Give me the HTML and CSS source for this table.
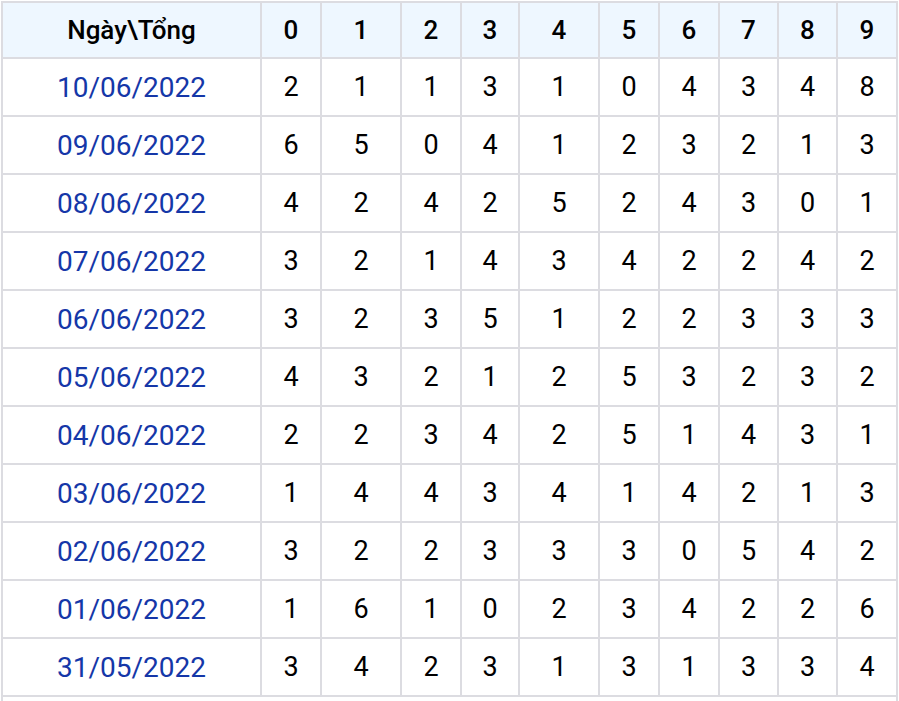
FILE: index.html
```html
<!DOCTYPE html>
<html lang="vi">
<head>
<meta charset="utf-8">
<title>Thống kê tổng</title>
<link rel="stylesheet" href="styles.css">
</head>
<body>
<div class="wrap">
<table class="stats">
<colgroup>
<col class="c-date"><col class="c60"><col class="c80"><col class="c60"><col class="c58"><col class="c80"><col class="c60"><col class="c60"><col class="c59"><col class="c59"><col class="c60">
</colgroup>
<thead>
<tr><th>Ngày\Tổng</th><th>0</th><th>1</th><th>2</th><th>3</th><th>4</th><th>5</th><th>6</th><th>7</th><th>8</th><th>9</th></tr>
</thead>
<tbody>
<tr><td class="date">10/06/2022</td><td>2</td><td>1</td><td>1</td><td>3</td><td>1</td><td>0</td><td>4</td><td>3</td><td>4</td><td>8</td></tr>
<tr><td class="date">09/06/2022</td><td>6</td><td>5</td><td>0</td><td>4</td><td>1</td><td>2</td><td>3</td><td>2</td><td>1</td><td>3</td></tr>
<tr><td class="date">08/06/2022</td><td>4</td><td>2</td><td>4</td><td>2</td><td>5</td><td>2</td><td>4</td><td>3</td><td>0</td><td>1</td></tr>
<tr><td class="date">07/06/2022</td><td>3</td><td>2</td><td>1</td><td>4</td><td>3</td><td>4</td><td>2</td><td>2</td><td>4</td><td>2</td></tr>
<tr><td class="date">06/06/2022</td><td>3</td><td>2</td><td>3</td><td>5</td><td>1</td><td>2</td><td>2</td><td>3</td><td>3</td><td>3</td></tr>
<tr><td class="date">05/06/2022</td><td>4</td><td>3</td><td>2</td><td>1</td><td>2</td><td>5</td><td>3</td><td>2</td><td>3</td><td>2</td></tr>
<tr><td class="date">04/06/2022</td><td>2</td><td>2</td><td>3</td><td>4</td><td>2</td><td>5</td><td>1</td><td>4</td><td>3</td><td>1</td></tr>
<tr><td class="date">03/06/2022</td><td>1</td><td>4</td><td>4</td><td>3</td><td>4</td><td>1</td><td>4</td><td>2</td><td>1</td><td>3</td></tr>
<tr><td class="date">02/06/2022</td><td>3</td><td>2</td><td>2</td><td>3</td><td>3</td><td>3</td><td>0</td><td>5</td><td>4</td><td>2</td></tr>
<tr><td class="date">01/06/2022</td><td>1</td><td>6</td><td>1</td><td>0</td><td>2</td><td>3</td><td>4</td><td>2</td><td>2</td><td>6</td></tr>
<tr><td class="date">31/05/2022</td><td>3</td><td>4</td><td>2</td><td>3</td><td>1</td><td>3</td><td>1</td><td>3</td><td>3</td><td>4</td></tr>
</tbody>
<tfoot>
<tr><td class="foot" colspan="11"></td></tr>
</tfoot>
</table>
</div>
</body>
</html>
```
FILE: styles.css
```css
html, body {
  margin: 0;
  padding: 0;
  background: #ffffff;
}
.wrap {
  padding: 1px 0 0 1px;
}
.stats {
  table-layout: fixed;
  border-collapse: separate;
  border-spacing: 0;
  width: 897px;
  border-left: 2px solid #dcdce1;
  border-top: 2px solid #dcdce1;
  font-family: Roboto, "Liberation Sans", sans-serif;
  color: #000;
}
.c-date { width: 259px; }
.c60 { width: 60px; }
.c80 { width: 80px; }
.c58 { width: 58px; }
.c59 { width: 59px; }
.stats th,
.stats td {
  box-sizing: border-box;
  border-right: 2px solid #dcdce1;
  border-bottom: 2px solid #dcdce1;
  padding: 0;
  text-align: center;
  vertical-align: middle;
}
.stats th {
  height: 56px;
  background: #eef7ff;
  font-size: 26px;
  font-weight: 500;
}
.stats td {
  height: 58px;
  font-size: 27px;
  font-weight: 400;
}
.stats td.date {
  color: #1537a8;
  font-size: 28px;
}
.stats td.foot {
  height: 40px;
}
```
